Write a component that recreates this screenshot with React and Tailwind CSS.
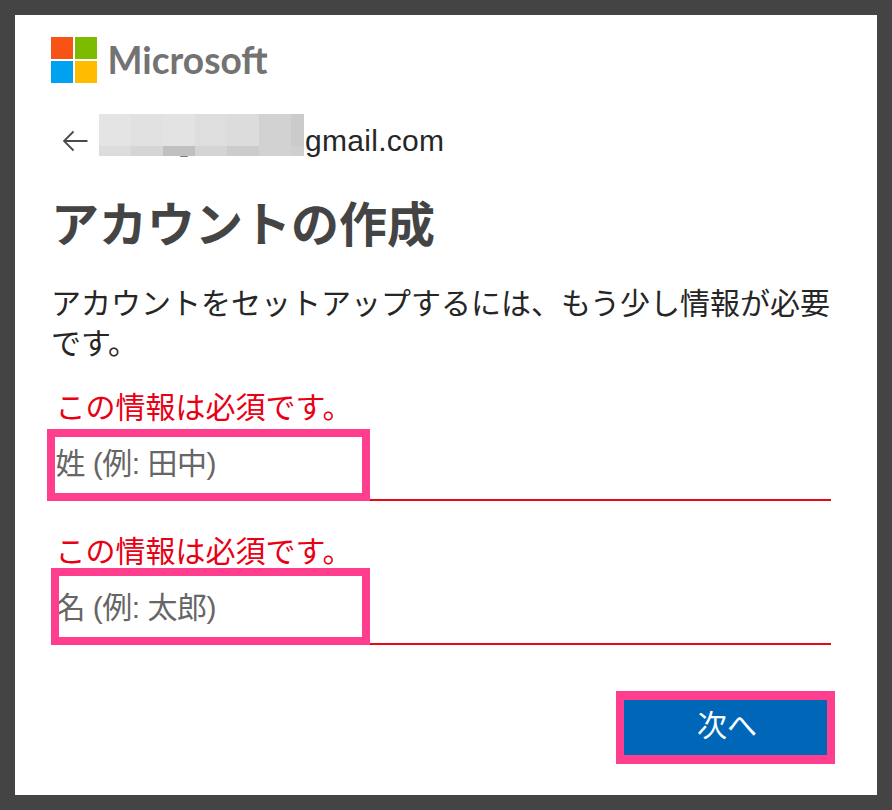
const jp = "font-['Liberation_Sans','Noto_Sans_CJK_JP',sans-serif]";

function Logo() {
  return (
    <div className="flex h-[46px] items-start gap-[12px]">
      <div className="grid h-[46px] w-[46px] grid-cols-2 grid-rows-2 gap-[2px]">
        <span className="bg-[#f65314]" />
        <span className="bg-[#7cbb00]" />
        <span className="bg-[#00a1f1]" />
        <span className="bg-[#ffbb00]" />
      </div>
      <svg className="-mt-[10px] overflow-visible" width="170" height="66" viewBox="0 -10 170 66" aria-label="Microsoft">
        <text
          x="-1.5"
          y="36.5"
          fontSize="38"
          fontWeight="700"
          textLength="160"
          lengthAdjust="spacingAndGlyphs"
          className="fill-[#737373] font-['Lato','Open_Sans',sans-serif]"
        >
          Microsoft
        </text>
        <path d="M142 16.5H158V20.3H142Z" className="fill-[#737373]" />
      </svg>
    </div>
  );
}

function MaskedName() {
  return (
    <div className="relative grid h-[42px] w-[205px] grid-cols-[32px_32px_32px_32px_32px_32px_13px] grid-rows-[32px_10px]">
      <span className="bg-[#e4e4e4]" />
      <span className="bg-[#e1e1e1]" />
      <span className="bg-[#e3e3e3]" />
      <span className="bg-[#dedede]" />
      <span className="bg-[#dcdcdc]" />
      <span className="bg-[#d2d2d2]" />
      <span className="bg-[#cbcbcb]" />
      <span className="bg-[#dcdcdc]" />
      <span className="bg-[#d5d5d5]" />
      <span className="bg-[#c0c0c0]" />
      <span className="bg-[#d4d4d4]" />
      <span className="bg-[#cccccc]" />
      <span className="bg-[#d2d2d2]" />
      <span className="bg-[#cfcfcf]" />
      <span className="absolute top-[42px] left-[81px] h-[1px] w-[8px] rounded-b-full bg-[#777777]" />
    </div>
  );
}

function Field({ hint, markClass }) {
  return (
    <div className="relative h-[144px]">
      <p className="h-[38px] pl-[4.5px] text-[30px] leading-[38px] text-[#e90015]">この情報は必須です。</p>
      <div className="flex h-[74px] items-center border-b-2 border-[#e60a17] pt-[1px] pl-[4.5px] text-[30px] tracking-[-0.5px] text-[#666666]">
        <span>{hint}</span>
      </div>
      <div className={markClass} />
    </div>
  );
}

export default function App() {
  return (
    <div className={`h-[810px] w-[892px] bg-[#444444] p-[15px] ${jp}`}>
      <main className="flex h-[780px] w-[862px] flex-col bg-white pt-[22px] pr-[46px] pl-[36px]">
        <Logo />
        <div className="mt-[31px] flex h-[44px] items-start">
          <svg className="mt-[16px] ml-[12px]" width="25" height="22" viewBox="0 0 25 22" fill="none" stroke="#4a4a4a" strokeWidth="1.8">
            <path d="M24.5 11H1M10.5 1.5L1 11L10.5 20.5" />
          </svg>
          <div className="ml-[11px]">
            <MaskedName />
          </div>
          <span className="mt-[7px] ml-[1px] text-[30px] leading-[40px] tracking-[0.3px] text-[#262626]">gmail.com</span>
        </div>
        <h1 className="mt-[36px] h-[64px] text-[48px] leading-[64px] font-bold text-[#444444]">アカウントの作成</h1>
        <p className="mt-[26px] h-[80px] w-[785px] text-[30px] leading-[40px] text-[#262626]">
          アカウントをセットアップするには、もう少し情報が必要
          <br />
          です。
        </p>
        <div className="mt-[25px] w-[780px]">
          <Field
            hint="姓 (例: 田中)"
            markClass="absolute top-[40px] -left-[4px] h-[72px] w-[323px] border-8 border-[#ff3f8e]"
          />
          <Field
            hint="名 (例: 太郎)"
            markClass="absolute top-[35px] left-0 h-[77px] w-[319px] border-8 border-[#ff3f8e]"
          />
        </div>
        <button className="-mr-[4px] mt-[14px] flex h-[73px] w-[219px] items-center justify-center self-end border-8 border-t-9 border-b-9 border-[#ff3f8e] bg-[#0067b8] pb-[4px] pl-[3px] text-[30px] text-white">
          次へ
        </button>
      </main>
    </div>
  );
}
